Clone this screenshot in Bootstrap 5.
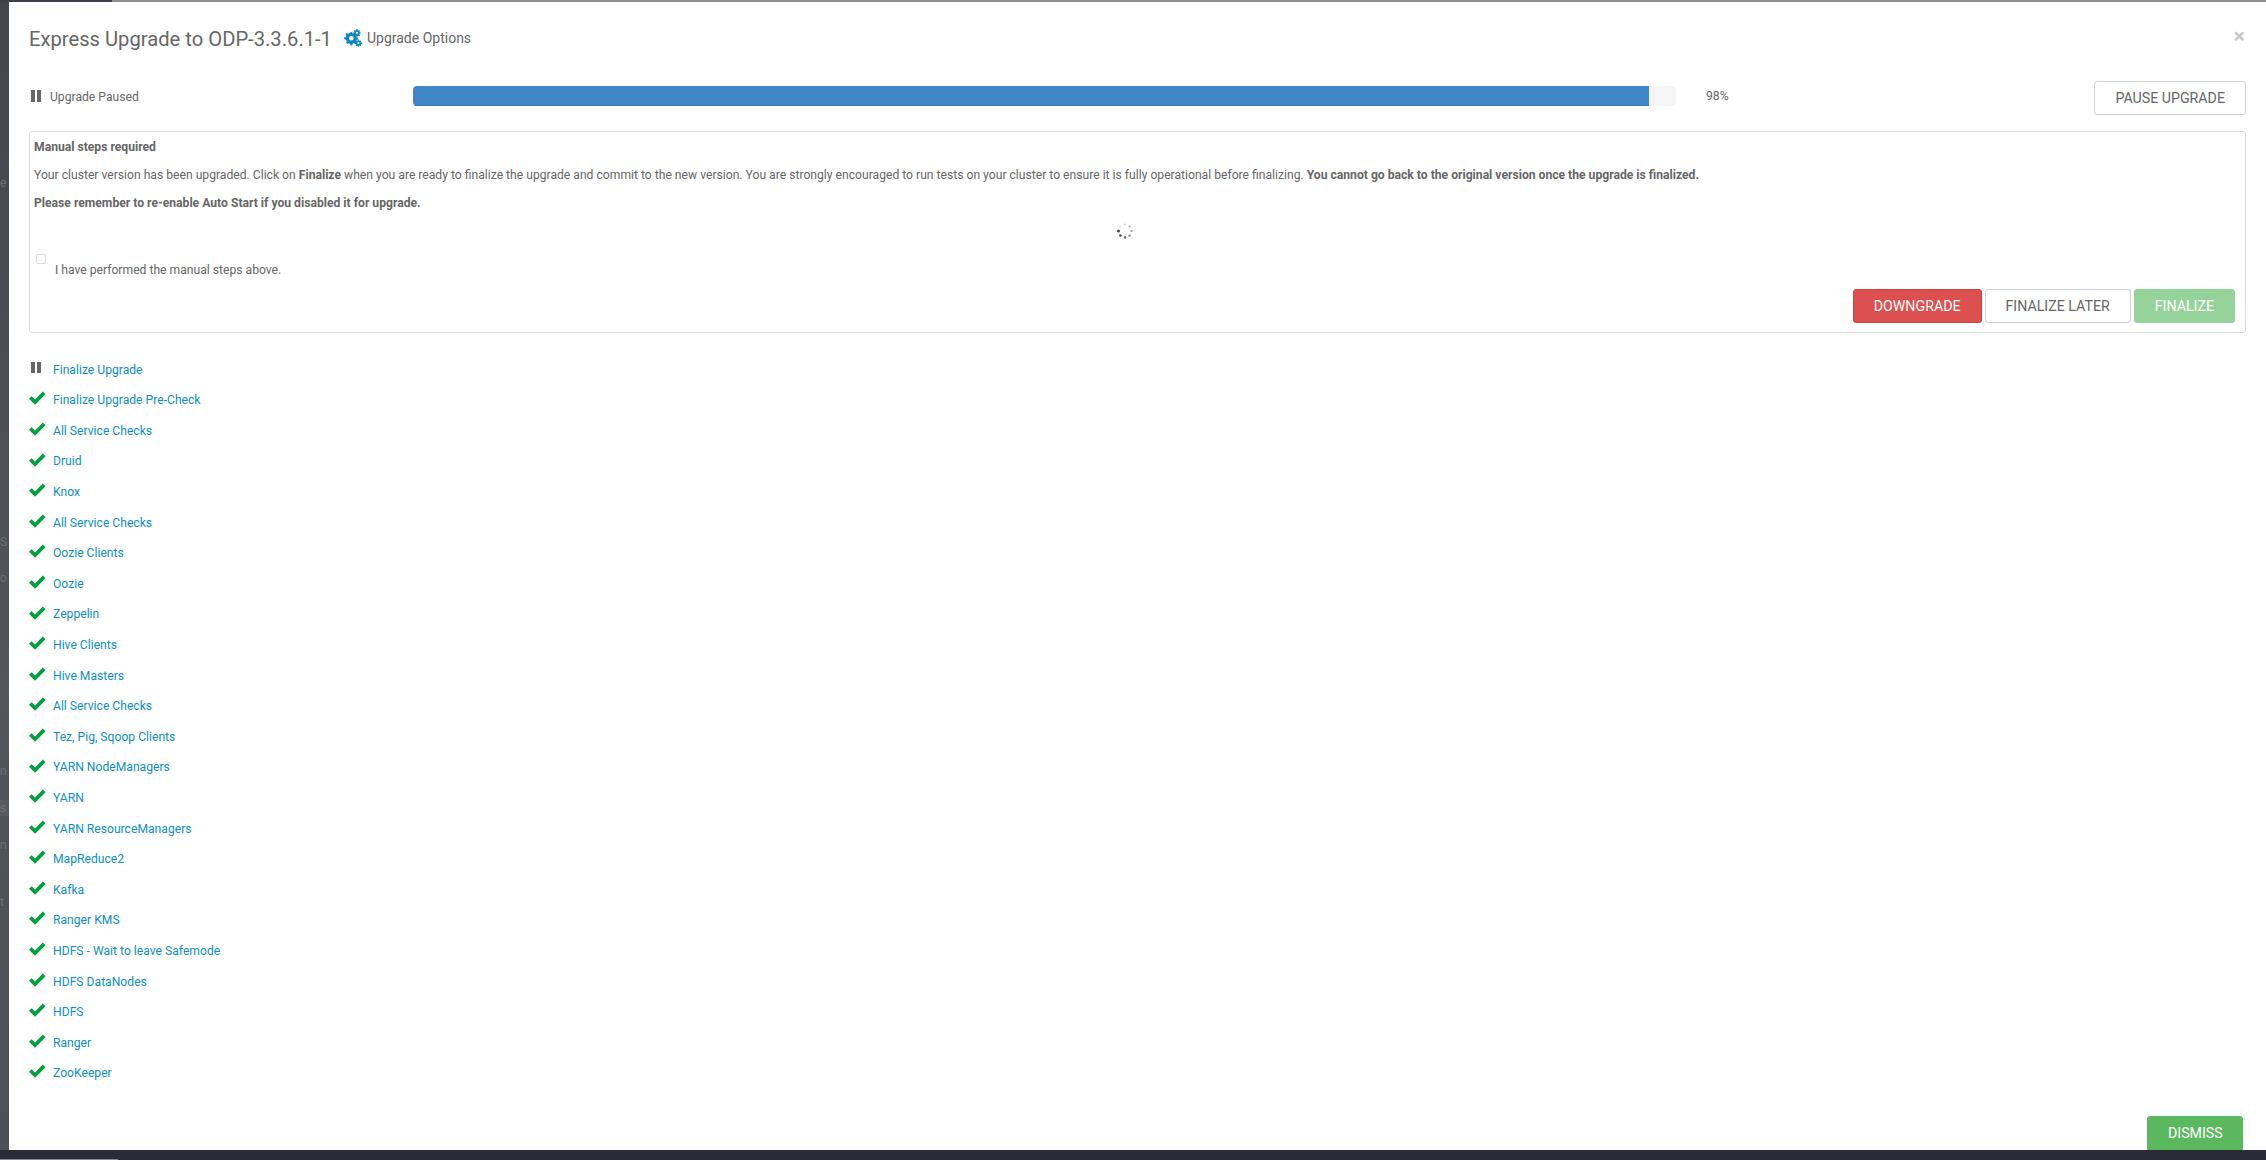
<!DOCTYPE html>
<html lang="en">
<head>
<meta charset="utf-8">
<title>Express Upgrade</title>
<link rel="stylesheet" href="https://cdn.jsdelivr.net/npm/bootstrap@5.3.0/dist/css/bootstrap.min.css">
<style>
html,body{height:1160px;overflow:hidden}
body{font-family:Roboto,"Liberation Sans",sans-serif;font-size:12.15px;color:#666;background:#4a4c55;letter-spacing:0}
.shell{height:1160px}
.topstrip{height:2px;background:linear-gradient(90deg,#3d3e48 0,#3d3e48 112px,#8f8f90 112px)}
.botstrip{height:10px;background:#2b2b35;position:relative}
.botstrip::after{content:"";position:absolute;left:0;bottom:0;width:118px;height:1px;background:#8a8a8e}
.leftstrip{width:9px;background:linear-gradient(180deg,#44454f,#53545c 60%,#4b4f58);flex:none;overflow:hidden;font-size:12px;line-height:16px;color:#6e6f75;white-space:nowrap}
.peek{display:block;height:16px}
.pk1{margin-top:173px}.pk2{margin-top:343px}.pk3{margin-top:20px}.pk4{margin-top:177px}.pk5{margin-top:21px;background:#5a5b62}.pk6{margin-top:21px}.pk7{margin-top:41px}
.sheet{background:#fff;overflow:hidden;min-width:0}
.headline{height:74px;padding:0 21px 0 20px}
.headline h4{font-size:20.2px;font-weight:400;color:#666;margin:0;line-height:24px}
.optlink{font-size:14px;color:#666;margin-left:12px;margin-top:-2px;text-decoration:none}
.gearic{margin-right:5px}
.closex{font-size:21px;font-weight:700;color:#c8c8c8;line-height:1;margin-top:-5px}
.statusrow{height:42px;padding:0 20px 0 20px}
.statlabel{width:384px;flex:none;font-size:12.15px}
.pausei{width:10px;height:12px;margin:-2px 9px 0 2px;flex:none}
.barwrap{width:1263px;flex:none;margin-top:-2px}
.barwrap.progress{height:20px;background:#f5f5f5;border-radius:4px}
.barwrap .progress-bar{background:#3f86c6;border-bottom:1px solid #3a7cb8}
.pct{margin-left:30px;font-size:12.15px;margin-top:-2px}
.btn.ubtn{font-size:14.2px;line-height:20px;padding:6px 20px;border-radius:3px;text-transform:uppercase;font-family:Roboto,"Liberation Sans",sans-serif;height:34px}
.btn.bwhite{background:#fff;border:1px solid #cfd3da;color:#666}
.btn.bred{background:#dc5050;border:1px solid #d23f3f;color:#fff}
.btn.bgreen{background:#95d39b;border:1px solid #95d39b;color:#fff;opacity:1;padding-top:5px}
.btn.bdismiss{background:#5cb85f;border:1px solid #5cb85f;color:#fff;width:96px;height:34px;border-bottom-left-radius:0;border-bottom-right-radius:0}
.pausebtn{margin-top:2px}
.stepsbox{margin:13px 20px 0 20px;height:202px;border:1px solid #dcdcdc;border-radius:3px;padding:8px 5px 0 4px}
.stepsbox .para{margin:0;line-height:14px;height:28px;font-size:12.15px}
.stepsbox b{font-weight:700}
.spin{height:28px;margin-top:-7px;padding-right:24px}
.ckrow{margin-top:9px;height:28px}
.ckbox{width:10px;height:10px;border:1px solid #ddd;border-radius:2px;margin-top:0;margin-left:2px;flex:none}
.cktxt{margin-left:9px;margin-top:7px}
.actions{gap:3px;padding-right:5px;margin-top:7px}
.stepslist{padding:0 0 0 20px;margin:21.500px 0 0 0;flex:1 1 auto;min-height:0}
.stepitem{height:30.6px}
.stepitem a{color:#0d8fc0;text-decoration:none;font-size:12.15px}
.ico{width:17px;flex:none;margin:-4px 7px 0 0;display:block}
.foot{padding-right:23px;margin-top:auto}
</style>
</head>
<body>
<div class="shell d-flex flex-column">
  <div class="topstrip"></div>
  <div class="d-flex flex-grow-1" style="min-height:0">
    <div class="leftstrip">
      <span class="peek pk1">e</span><span class="peek pk2">S</span><span class="peek pk3">o</span><span class="peek pk4">n</span><span class="peek pk5">s</span><span class="peek pk6">n</span><span class="peek pk7">t</span>
    </div>
    <div class="sheet d-flex flex-column flex-grow-1">
      <div class="headline d-flex align-items-center">
        <h4>Express Upgrade to ODP-3.3.6.1-1</h4>
        <a class="optlink d-flex align-items-center" href="#">
          <svg width="18" height="18" viewBox="0 0 18 18" class="gearic"><g fill="#0d87c4"><path fill-rule="evenodd" d="M6.5 4.2l1.7-.3.5 1.6 1.3.6 1.5-.8 1.2 1.2-.8 1.5.6 1.3 1.6.5v1.7l-1.6.5-.6 1.3.8 1.5-1.2 1.2-1.5-.8-1.3.6-.5 1.6H6.500l-.5-1.600-1.300-.6-1.500.8-1.200-1.200.8-1.500-.6-1.300L.1 11.100V9.400l1.600-.5.6-1.300-.8-1.500 1.200-1.200 1.500.8 1.300-.6zM7.300 8a2.300 2.300 0 1 0 0 4.600 2.300 2.300 0 0 0 0-4.600z" transform="translate(0 -1)"/><path fill-rule="evenodd" d="M13.500 0l1 .1.2 1 .8.400.9-.5.700.8-.5.900.3.800 1 .300v1l-1 .3-.3.800.5.900-.7.700-.9-.5-.8.300-.3 1h-1l-.2-1-.8-.3-.9.500-.7-.7.500-.9-.4-.8-1-.3v-1l1-.2.4-.8-.5-.9.700-.8.900.5.800-.4zM14 2.800a1.200 1.200 0 1 0 0 2.400 1.200 1.200 0 0 0 0-2.400z" transform="translate(-.3 0) scale(.95)"/><path fill-rule="evenodd" d="M14 11l.9.1.2.900.700.300.8-.4.600.7-.4.800.3.700.9.200v.9l-.9.200-.3.700.4.800-.6.600-.8-.4-.7.300-.2.900h-.9l-.2-.9-.7-.3-.8.400-.6-.6.400-.8-.3-.7-.9-.2v-.9l.9-.2.300-.7-.4-.8.600-.7.800.4.700-.3zm.4 2.400a1 1 0 1 0 0 2 1 1 0 0 0 0-2z" transform="translate(0 -.5)"/></g></svg>
          <span>Upgrade Options</span>
        </a>
        <span class="closex ms-auto">×</span>
      </div>
      <div class="statusrow d-flex align-items-center">
        <div class="statlabel d-flex align-items-center">
          <svg class="pausei" viewBox="0 0 10 12"><rect x="0" y="0" width="4" height="12" fill="#666"/><rect x="6" y="0" width="4" height="12" fill="#666"/></svg>
          <span>Upgrade Paused</span>
        </div>
        <div class="progress barwrap"><div class="progress-bar" style="width:97.9%"></div></div>
        <span class="pct">98%</span>
        <button class="btn ubtn bwhite ms-auto pausebtn">Pause Upgrade</button>
      </div>
      <div class="stepsbox">
        <p class="para"><b>Manual steps required</b></p>
        <p class="para">Your cluster version has been upgraded. Click on <b>Finalize</b> when you are ready to finalize the upgrade and commit to the new version. You are strongly encouraged to run tests on your cluster to ensure it is fully operational before finalizing. <b>You cannot go back to the original version once the upgrade is finalized.</b></p>
        <p class="para"><b>Please remember to re-enable Auto Start if you disabled it for upgrade.</b></p>
        <div class="spin d-flex justify-content-center align-items-center">
          <svg width="16" height="16" viewBox="0 0 16 16">
            <circle cx="8" cy="1.500" r="1" fill="#ccc"/><circle cx="12.600" cy="3.400" r="1.100" fill="#aaa"/><circle cx="14.500" cy="8" r="1.100" fill="#999"/><circle cx="12.600" cy="12.600" r="1.200" fill="#888"/><circle cx="8" cy="14.500" r="1.300" fill="#666"/><circle cx="3.400" cy="12.600" r="1.400" fill="#555"/><circle cx="1.500" cy="8" r="1.500" fill="#444"/><circle cx="3.400" cy="3.400" r=".8" fill="#ddd"/>
          </svg>
        </div>
        <div class="ckrow d-flex">
          <span class="ckbox"></span>
          <span class="cktxt">I have performed the manual steps above.</span>
        </div>
        <div class="actions d-flex justify-content-end">
          <button class="btn ubtn bred">Downgrade</button>
          <button class="btn ubtn bwhite">Finalize Later</button>
          <button class="btn ubtn bgreen">Finalize</button>
        </div>
      </div>
      <ul class="stepslist list-unstyled" id="stepsl">
        <li class="stepitem d-flex align-items-center"><svg class="ico" width="17" height="12" viewBox="0 0 17 12"><rect x="2" y="0" width="4" height="11" fill="#666"/><rect x="8" y="0" width="4" height="11" fill="#666"/></svg><a href="#">Finalize Upgrade</a></li>
      </ul>
      <div class="foot d-flex justify-content-end">
        <button class="btn ubtn bdismiss">Dismiss</button>
      </div>
    </div>
  </div>
  <div class="botstrip"></div>
</div>
<script>
var names=["Finalize Upgrade Pre-Check","All Service Checks","Druid","Knox","All Service Checks","Oozie Clients","Oozie","Zeppelin","Hive Clients","Hive Masters","All Service Checks","Tez, Pig, Sqoop Clients","YARN NodeManagers","YARN","YARN ResourceManagers","MapReduce2","Kafka","Ranger KMS","HDFS - Wait to leave Safemode","HDFS DataNodes","HDFS","Ranger","ZooKeeper"];
var ul=document.getElementById('stepsl');
names.forEach(function(n){
  var li=document.createElement('li');li.className='stepitem d-flex align-items-center';
  li.innerHTML='<svg class="ico" width="17" height="14" viewBox="0 0 17 14"><path d="M0 7.800L2.600 5.200 6 8.600 13.800 .6 16.500 3.200 6 13.800z" fill="#00a03c"/></svg><a href="#"></a>';
  li.querySelector('a').textContent=n;ul.appendChild(li);
});
</script>
<script src="https://cdn.jsdelivr.net/npm/bootstrap@5.3.0/dist/js/bootstrap.bundle.min.js"></script>
</body>
</html>
